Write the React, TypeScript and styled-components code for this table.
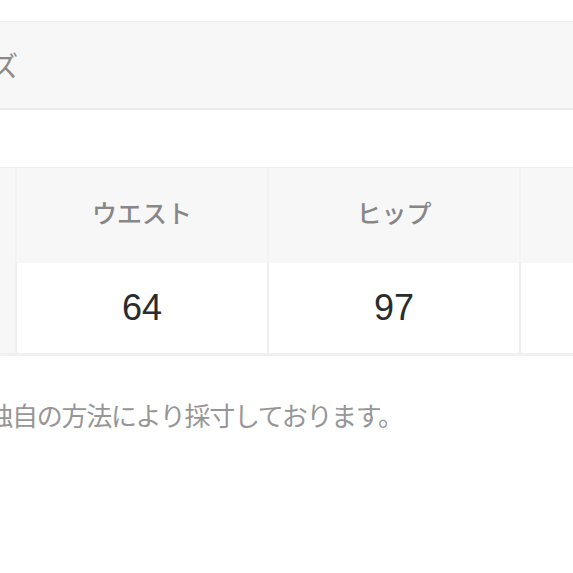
import React from "react";
import styled, { createGlobalStyle } from "styled-components";

const GlobalStyle = createGlobalStyle`
  html, body {
    margin: 0;
    padding: 0;
    background: #ffffff;
    overflow: hidden;
  }
  body {
    width: 573px;
    height: 573px;
    font-family: "Noto Sans CJK JP", "Noto Sans", sans-serif;
  }
`;

const Page = styled.div`
  width: 573px;
  height: 573px;
  overflow: hidden;
  padding-top: 21px;
  box-sizing: border-box;
`;

const TitleBand = styled.div`
  height: 89px;
  box-sizing: border-box;
  background: #f7f7f7;
  border-top: 1px solid #ededed;
  border-bottom: 2px solid #ebebeb;
  display: flex;
  align-items: center;
`;

const TitleText = styled.div`
  margin-left: -65px;
  font-size: 28px;
  color: #8a8a8a;
  white-space: nowrap;
  line-height: 1;
`;

const Table = styled.div`
  margin-top: 57px;
  margin-left: -235px;
  display: flex;
  flex-direction: column;
  border-top: 1px solid #f0f0f0;
  border-bottom: 3px solid #f0f0f0;
  width: max-content;
`;

const Row = styled.div<{ $height: number }>`
  display: flex;
  height: ${(p) => p.$height}px;
`;

const Cell = styled.div<{ $head?: boolean; $label?: boolean }>`
  width: 252px;
  box-sizing: border-box;
  display: flex;
  align-items: center;
  justify-content: center;
  background: ${(p) => (p.$head || p.$label ? "#f7f7f7" : "#ffffff")};
  border-right: 2px solid ${(p) => (p.$head ? "#f3f3f3" : "#efefef")};
  color: ${(p) => (p.$head ? "#878787" : "#2b2b2b")};
  font-family: ${(p) =>
    p.$head
      ? `"Noto Sans CJK JP", sans-serif`
      : `"Liberation Sans", Arial, sans-serif`};
  font-size: ${(p) => (p.$head ? 25 : 36)}px;
  font-weight: ${(p) => (p.$head ? 500 : 400)};
  padding-bottom: ${(p) => (p.$head ? 8 : 0)}px;
  white-space: nowrap;
`;

const Note = styled.p`
  margin: 40px 0 0 -62px;
  font-size: 26px;
  letter-spacing: -1.3px;
  line-height: 1.45;
  color: #969696;
  white-space: nowrap;
`;

const headers = ["", "ウエスト", "ヒップ", ""];
const values = ["", "64", "97", ""];

export default function App() {
  return (
    <>
      <GlobalStyle />
      <Page>
        <TitleBand>
          <TitleText>サイズ</TitleText>
        </TitleBand>
        <Table>
          <Row $height={95}>
            {headers.map((h, i) => (
              <Cell key={i} $head>
                {h}
              </Cell>
            ))}
          </Row>
          <Row $height={90}>
            {values.map((v, i) => (
              <Cell key={i} $label={i === 0}>
                {v}
              </Cell>
            ))}
          </Row>
        </Table>
        <Note>当店独自の方法により採寸しております。</Note>
      </Page>
    </>
  );
}
